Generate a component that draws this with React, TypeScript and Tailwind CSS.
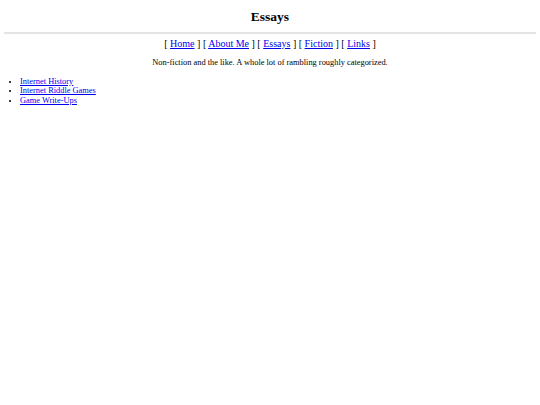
export default function App() {
  const navLinks = ['Home', 'About Me', 'Essays', 'Fiction', 'Links'];
  const essays = ['Internet History', 'Internet Riddle Games', 'Game Write-Ups'];

  return (
    <div className="min-h-[405px] bg-white px-[4px] pt-[9px] text-[8.4px] leading-[9.66px] text-black [font-family:'Liberation_Serif',serif]">
      <h1 className="text-center text-[13.5px] font-bold leading-[15.5px]">Essays</h1>
      <div className="mt-[7.5px] h-[2px] w-full bg-[#e4e4e4]" />
      <div className="mt-[4px] text-center text-[10px] leading-[11.5px]">
        {navLinks.map((link, i) => (
          <span key={link}>
            [ <a href="#" className="text-[#0000ee] underline">{link}</a> ]{i < navLinks.length - 1 ? ' ' : ''}
          </span>
        ))}
      </div>
      <p className="mt-[8.5px] text-center">Non-fiction and the like. A whole lot of rambling roughly categorized.</p>
      <ul className="mt-[9px] list-disc pl-[16px]">
        {essays.map((item) => (
          <li key={item}>
            <a href="#" className="text-[#0000ee] underline">{item}</a>
          </li>
        ))}
      </ul>
    </div>
  );
}
